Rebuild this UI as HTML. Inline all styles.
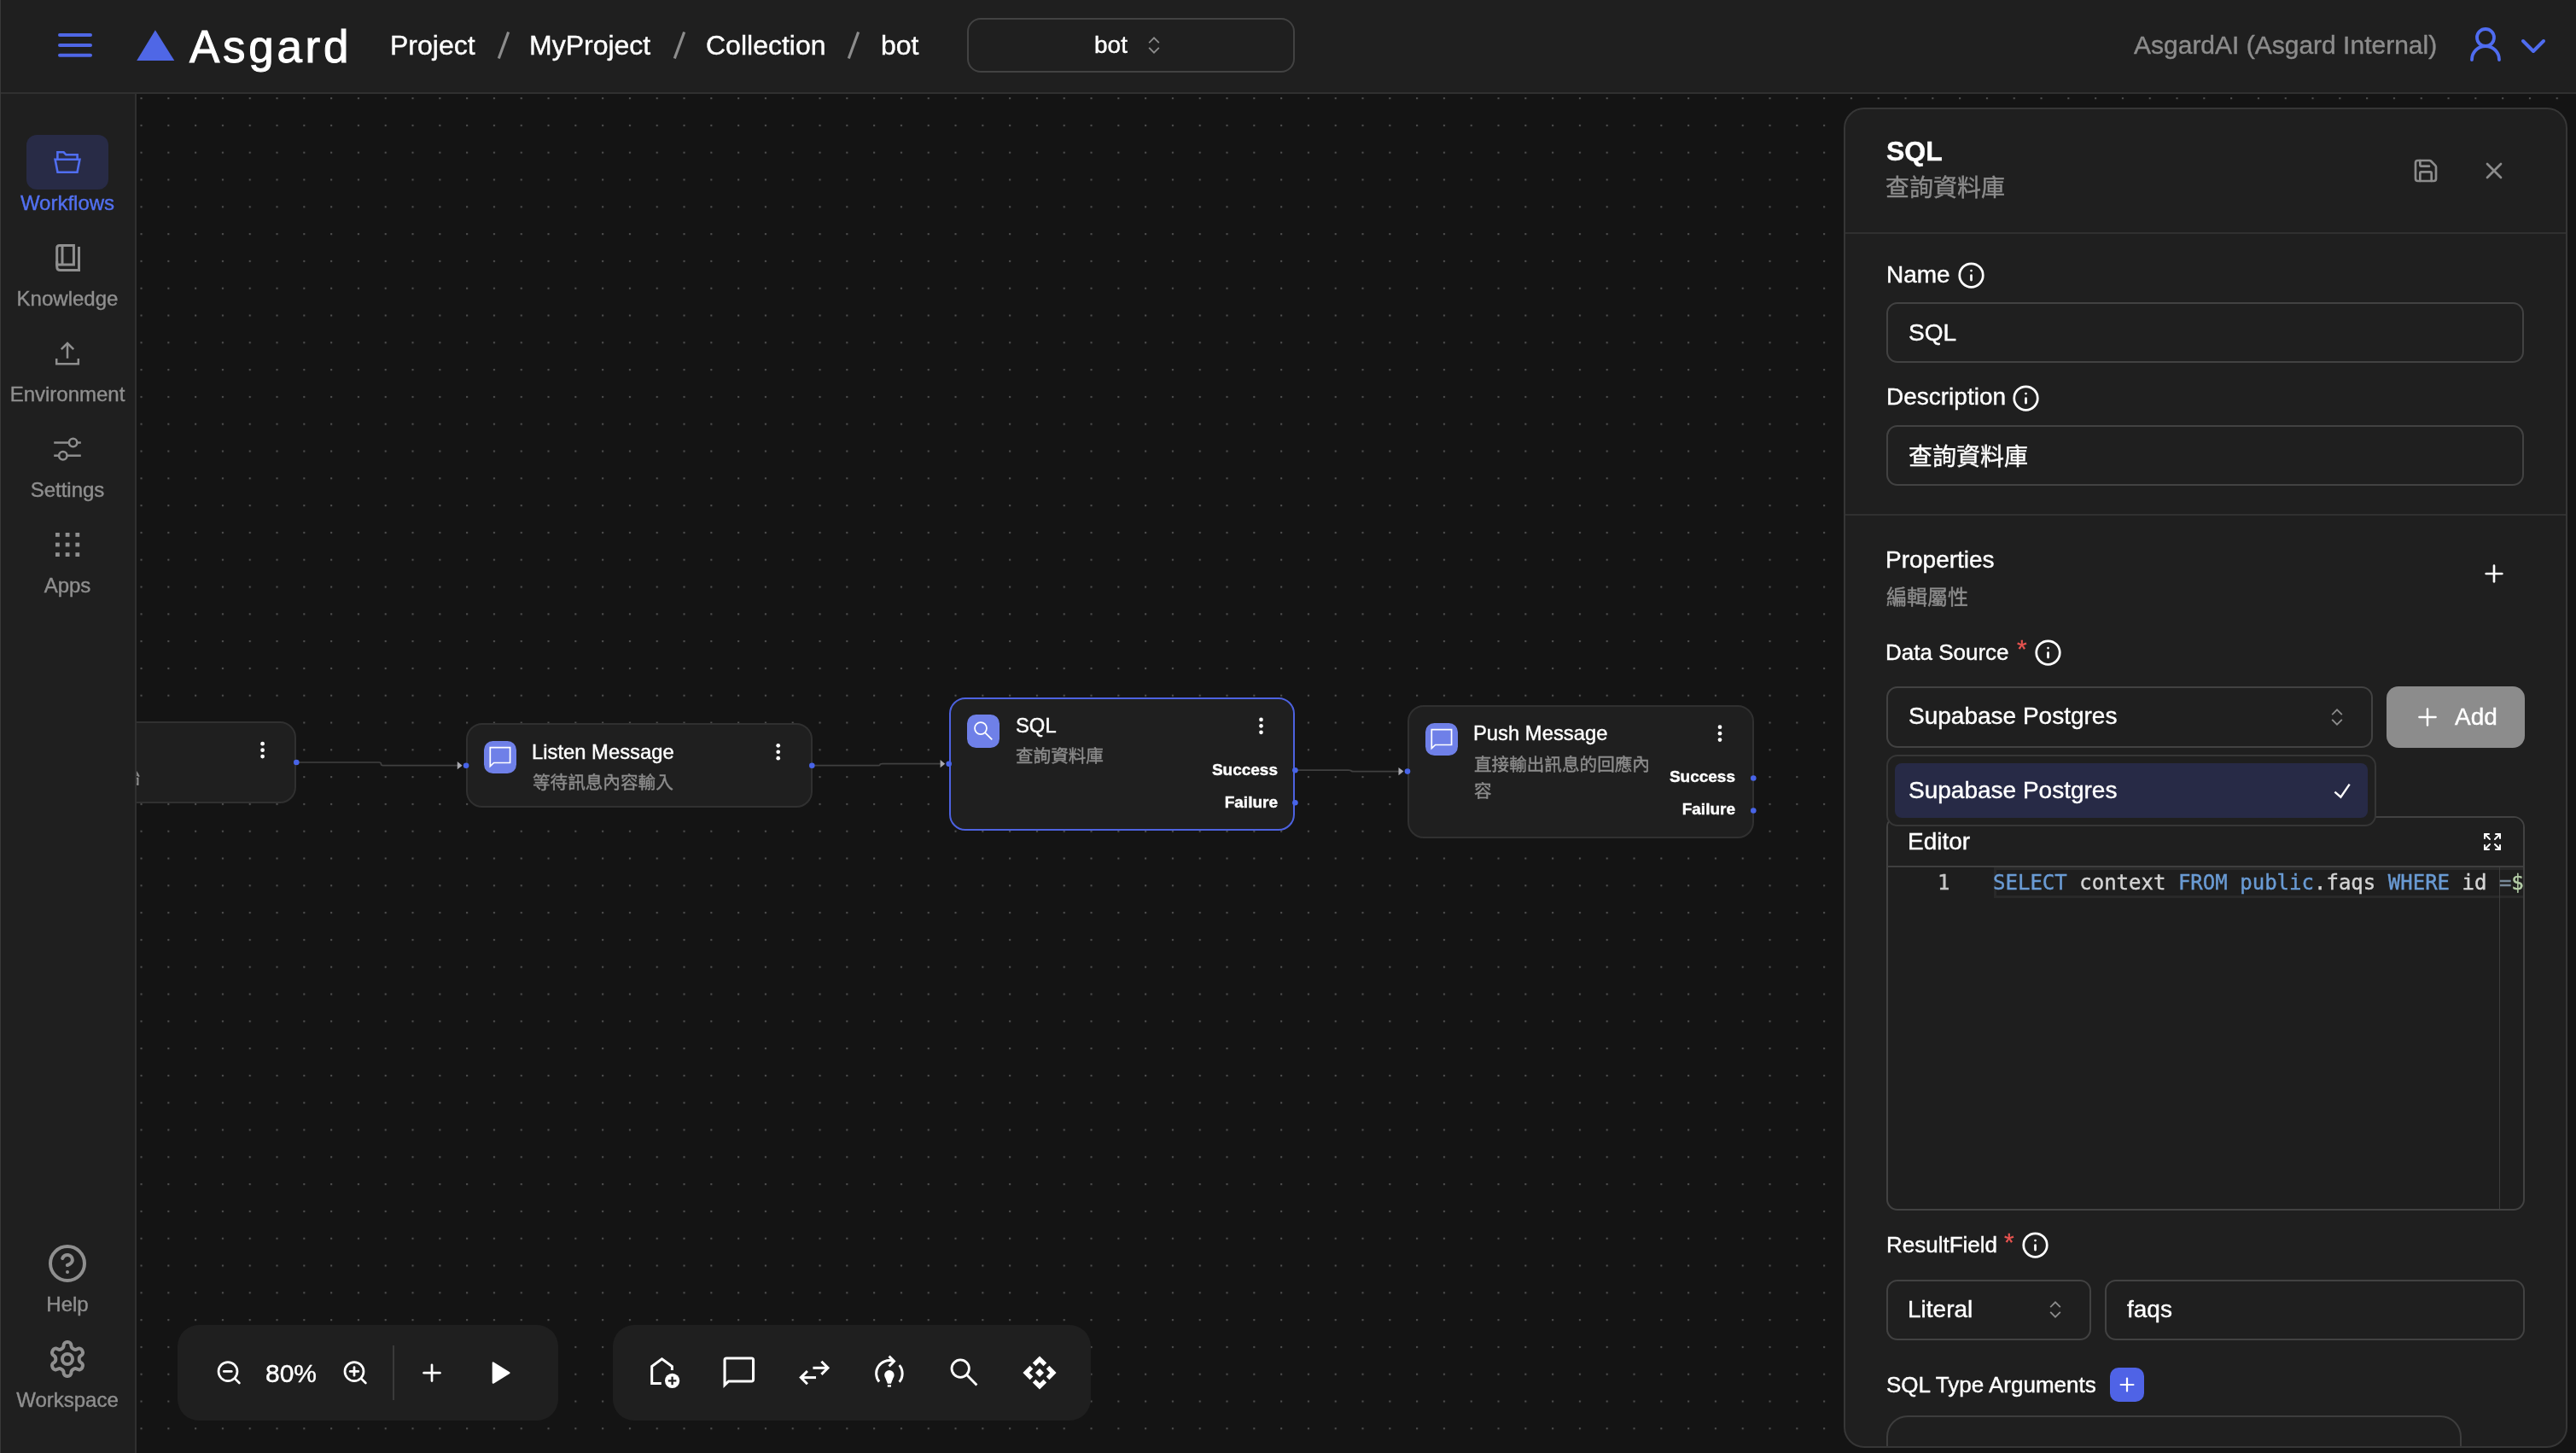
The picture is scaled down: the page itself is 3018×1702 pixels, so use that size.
<!DOCTYPE html>
<html lang="zh-Hant"><head><meta charset="utf-8"><title>Asgard - bot</title>
<style>
html,body{margin:0;padding:0;background:#141414;}
body{width:3018px;height:1702px;overflow:hidden;position:relative;font-family:"Liberation Sans","Noto Sans CJK TC",sans-serif;color:#fff;}
*{box-sizing:border-box;}
.t{position:absolute;white-space:nowrap;line-height:1;-webkit-text-stroke:0.4px;will-change:transform;}
.c{text-align:center;}
.abs{position:absolute;}
svg{position:absolute;overflow:visible;}
.mono{font-family:"DejaVu Sans Mono","Liberation Mono",monospace;}
.box{position:absolute;border:2px solid #424242;border-radius:13px;background:#1f1f1f;}
.node{position:absolute;border:2px solid #323232;border-radius:19px;background:#1f1f1f;}
.ico{position:absolute;width:38.4px;height:38.4px;border-radius:10.5px;background:#6f80e8;}
.h{position:absolute;width:7.4px;height:7.4px;border-radius:50%;background:#4864e8;}
.md{position:absolute;width:4.8px;height:4.8px;border-radius:50%;background:#fff;}
</style></head><body>
<svg width="3018" height="1702" style="left:0;top:0"><defs><pattern id="dp" x="164.5" y="114.1" width="31.8" height="31.8" patternUnits="userSpaceOnUse"><rect x="0" y="0" width="2.1" height="2.1" fill="#4e4e4e"/></pattern></defs><rect x="160" y="110" width="2858" height="1592" fill="url(#dp)"/></svg>
<div class="abs" style="left:0;top:0;width:3018px;height:110px;background:#1f1f1f;border-bottom:2px solid #303030;z-index:5"></div>
<div class="abs" style="left:0;top:0;width:3018px;height:110px;z-index:6">
<svg width="44" height="32" style="left:66px;top:37px" viewBox="66 37 44 32"><g stroke="#4f67e6" stroke-width="4" stroke-linecap="round"><line x1="70" y1="41" x2="106" y2="41"/><line x1="70" y1="52.9" x2="106" y2="52.9"/><line x1="70" y1="64.8" x2="106" y2="64.8"/></g></svg>
<svg width="48" height="40" style="left:158px;top:33px" viewBox="158 33 48 40"><polygon points="181.9,35.2 204.3,71 160.2,71" fill="#4f67e6"/></svg>
<div class="t" style="left:221.80px;top:27.94px;font-size:53px;color:#fff;letter-spacing:3.7px;-webkit-text-stroke:1px #fff;">Asgard</div>
<div class="t" style="left:456.80px;top:36.91px;font-size:32px;color:#fff;">Project</div>
<div class="t" style="left:620.00px;top:36.91px;font-size:32px;color:#fff;">MyProject</div>
<div class="t" style="left:827.20px;top:36.91px;font-size:32px;color:#fff;">Collection</div>
<div class="t" style="left:1031.50px;top:36.91px;font-size:32px;color:#fff;">bot</div>
<svg width="20" height="36" style="left:580.4px;top:35px" viewBox="-10 -18 20 36"><line x1="5.7" y1="-15.5" x2="-5.7" y2="15.5" stroke="#8c8c8c" stroke-width="3.2"/></svg>
<svg width="20" height="36" style="left:786.1px;top:35px" viewBox="-10 -18 20 36"><line x1="5.7" y1="-15.5" x2="-5.7" y2="15.5" stroke="#8c8c8c" stroke-width="3.2"/></svg>
<svg width="20" height="36" style="left:989.7px;top:35px" viewBox="-10 -18 20 36"><line x1="5.7" y1="-15.5" x2="-5.7" y2="15.5" stroke="#8c8c8c" stroke-width="3.2"/></svg>
<div class="abs" style="left:1133px;top:21px;width:384px;height:64px;border:2px solid #424242;border-radius:16px;"></div>
<div class="t" style="left:1281.60px;top:38.90px;font-size:28px;color:#fff;">bot</div>
<svg width="20" height="30" style="left:1342.00px;top:38.20px" viewBox="-10 -15 20 30"><g fill="none" stroke="#8c8c8c" stroke-width="1.8" stroke-linecap="square" stroke-linejoin="miter"><polyline points="-5.2,-3.4 0,-8.7 5.2,-3.4"/><polyline points="-5.2,3.4 0,8.7 5.2,3.4"/></g></svg>
<div class="t" style="left:2500.20px;top:38.11px;font-size:30px;color:#8c8c8c;">AsgardAI (Asgard Internal)</div>
<svg width="48" height="48" style="left:2888.2px;top:28px" viewBox="0 0 24 24" fill="none" stroke="#4f6cf0" stroke-width="1.9" stroke-linecap="round" stroke-linejoin="round"><circle cx="12" cy="8" r="5"/><path d="M20 21a8 8 0 0 0-16 0"/></svg>
<svg width="48" height="48" style="left:2944px;top:29.6px" viewBox="0 0 24 24" fill="none" stroke="#4f6cf0" stroke-width="2" stroke-linecap="round" stroke-linejoin="round"><path d="m6 9 6 6 6-6"/></svg>
</div>
<div class="abs" style="left:0;top:110px;width:160px;height:1592px;background:#1f1f1f;border-right:2px solid #303030;z-index:4"></div>
<div class="abs" style="left:0;top:0;width:1px;height:1702px;background:#383838;z-index:7"></div>
<div class="abs" style="left:0;top:0;width:160px;height:1702px;z-index:6">
<div class="abs" style="left:31px;top:158px;width:96px;height:64px;border-radius:12px;background:#282b46"></div>
<svg width="40" height="34" style="left:59px;top:173px" viewBox="59 173 40 34"><g fill="none" stroke="#506ef0" stroke-width="2.6" stroke-linejoin="miter"><path d="M67.4 186.8 V178.3 H74.6 L77.4 181.3 H90.6 V186.8"/><path d="M64.6 186.8 H93.4 L90.5 201.7 H67.5 Z"/></g></svg>
<div class="t c" style="left:0.00px;width:158px;top:226.08px;font-size:24px;color:#5270f0;">Workflows</div>
<svg width="36" height="40" style="left:61px;top:282px" viewBox="61 282 36 40"><g fill="none" stroke="#8f8f8f" stroke-width="3"><path d="M69.7 287.5 H86.4 V310.1 H66.7 V290.5 Q66.7 287.5 69.7 287.5 Z"/><line x1="73" y1="287.5" x2="73" y2="310.1"/><path d="M66.7 306 V312.5 Q66.7 316.5 70.7 316.5 H92.5 V288.9"/></g></svg>
<div class="t c" style="left:0.00px;width:158px;top:337.68px;font-size:24px;color:#8f8f8f;">Knowledge</div>
<svg width="36" height="36" style="left:61px;top:396px" viewBox="61 396 36 36"><g fill="none" stroke="#8f8f8f" stroke-width="2.5"><path d="M79 419.8 V402"/><path d="M71.8 409.2 L79 402 L86.2 409.2"/><path d="M66.2 420 V426.3 H91.8 V420"/></g></svg>
<div class="t c" style="left:0.00px;width:158px;top:449.68px;font-size:24px;color:#8f8f8f;">Environment</div>
<svg width="40" height="30" style="left:59px;top:510px" viewBox="59 510 40 30"><g fill="none" stroke="#8f8f8f" stroke-width="2.5"><line x1="63.2" y1="518.5" x2="80.6" y2="518.5"/><line x1="90.6" y1="518.5" x2="94.8" y2="518.5"/><circle cx="85.6" cy="518.5" r="4.7"/><line x1="63.2" y1="533.7" x2="68.8" y2="533.7"/><line x1="78.8" y1="533.7" x2="94.8" y2="533.7"/><circle cx="73.8" cy="533.7" r="4.7"/></g></svg>
<div class="t c" style="left:0.00px;width:158px;top:561.98px;font-size:24px;color:#8f8f8f;">Settings</div>
<svg width="36" height="36" style="left:61px;top:620px" viewBox="61 620 36 36"><g fill="#8f8f8f"><rect x="65" y="624" width="4.8" height="4.8"/><rect x="76.7" y="624" width="4.8" height="4.8"/><rect x="88.4" y="624" width="4.8" height="4.8"/><rect x="65" y="635.6" width="4.8" height="4.8"/><rect x="76.7" y="635.6" width="4.8" height="4.8"/><rect x="88.4" y="635.6" width="4.8" height="4.8"/><rect x="65" y="647.2" width="4.8" height="4.8"/><rect x="76.7" y="647.2" width="4.8" height="4.8"/><rect x="88.4" y="647.2" width="4.8" height="4.8"/></g></svg>
<div class="t c" style="left:0.00px;width:158px;top:674.28px;font-size:24px;color:#8f8f8f;">Apps</div>
<svg width="48" height="48" style="left:55px;top:1456px" viewBox="0 0 24 24" fill="none" stroke="#8f8f8f" stroke-width="2" stroke-linecap="round" stroke-linejoin="round"><circle cx="12" cy="12" r="10"/><path d="M9.09 9a3 3 0 0 1 5.83 1c0 2-3 3-3 3"/><path d="M12 17h.01"/></svg>
<div class="t c" style="left:0.00px;width:158px;top:1516.28px;font-size:24px;color:#8f8f8f;">Help</div>
<svg width="48" height="48" style="left:55px;top:1567.8px" viewBox="0 0 24 24" fill="none" stroke="#8f8f8f" stroke-width="2" stroke-linecap="round" stroke-linejoin="round"><path d="M12.22 2h-.44a2 2 0 0 0-2 2v.18a2 2 0 0 1-1 1.73l-.43.25a2 2 0 0 1-2 0l-.15-.08a2 2 0 0 0-2.73.73l-.22.38a2 2 0 0 0 .73 2.73l.15.1a2 2 0 0 1 1 1.72v.51a2 2 0 0 1-1 1.74l-.15.09a2 2 0 0 0-.73 2.73l.22.38a2 2 0 0 0 2.73.73l.15-.08a2 2 0 0 1 2 0l.43.25a2 2 0 0 1 1 1.73V20a2 2 0 0 0 2 2h.44a2 2 0 0 0 2-2v-.18a2 2 0 0 1 1-1.73l.43-.25a2 2 0 0 1 2 0l.15.08a2 2 0 0 0 2.73-.73l.22-.39a2 2 0 0 0-.73-2.73l-.15-.08a2 2 0 0 1-1-1.74v-.5a2 2 0 0 1 1-1.74l.15-.09a2 2 0 0 0 .73-2.73l-.22-.38a2 2 0 0 0-2.73-.73l-.15.08a2 2 0 0 1-2 0l-.43-.25a2 2 0 0 1-1-1.73V4a2 2 0 0 0-2-2z"/><circle cx="12" cy="12" r="3"/></svg>
<div class="t c" style="left:0.00px;width:158px;top:1628.08px;font-size:24px;color:#8f8f8f;">Workspace</div>
</div>
<div class="node" style="left:100px;top:845px;width:247.1px;height:95.8px;border-color:#303030;z-index:2"></div>


<div class="t" style="left:60px;width:104.2px;text-align:right;top:900.86px;font-size:20.6px;color:#8c8c8c;z-index:3">流程開始</div>
<div class="node" style="left:546.0px;top:847.1px;width:405.5px;height:98.8px;border-color:#303030;z-index:2"></div>
<div class="ico" style="left:566.9px;top:868.0px;z-index:3"><svg width="38.4" height="38.4" viewBox="0 0 38.4 38.4" style="left:0;top:0"><path d="M7.3 7.7 H30.6 V25.5 H11.6 L7.3 29.6 Z" fill="none" stroke="#fff" stroke-width="1.7" stroke-linejoin="miter"/></svg></div>
<div class="t" style="left:623.00px;top:868.85px;font-size:23.8px;color:#fff;z-index:3">Listen Message</div>
<div class="t" style="left:624.40px;top:906.56px;font-size:20.6px;color:#8c8c8c;z-index:3">等待訊息內容輸入</div>



<div class="node" style="left:1111.7px;top:816.7px;width:405.7px;height:156.4px;border-color:#4d62e0;z-index:2"></div>
<div class="ico" style="left:1132.7px;top:837.4000000000001px;z-index:3"><svg width="38.4" height="38.4" viewBox="0 0 38.4 38.4" style="left:0;top:0"><g fill="none" stroke="#fff" stroke-width="1.7"><circle cx="16" cy="16.1" r="7"/><line x1="21" y1="21.1" x2="29.3" y2="29.4"/></g></svg></div>
<div class="t" style="left:1189.60px;top:838.15px;font-size:23.8px;color:#fff;z-index:3">SQL</div>
<div class="t" style="left:1190.10px;top:875.86px;font-size:20.6px;color:#8c8c8c;z-index:3">查詢資料庫</div>




<div class="t" style="left:1296.90px;width:200px;text-align:right;top:891.92px;font-size:19px;font-weight:bold;color:#fff;z-index:3">Success</div>
<div class="t" style="left:1296.90px;width:200px;text-align:right;top:929.92px;font-size:19px;font-weight:bold;color:#fff;z-index:3">Failure</div>
<div class="node" style="left:1648.9px;top:825.5px;width:405.8px;height:156.1px;border-color:#303030;z-index:2"></div>
<div class="ico" style="left:1669.8000000000002px;top:846.5px;z-index:3"><svg width="38.4" height="38.4" viewBox="0 0 38.4 38.4" style="left:0;top:0"><path d="M7.3 7.7 H30.6 V25.5 H11.6 L7.3 29.6 Z" fill="none" stroke="#fff" stroke-width="1.7" stroke-linejoin="miter"/></svg></div>
<div class="t" style="left:1725.90px;top:847.35px;font-size:23.8px;color:#fff;z-index:3">Push Message</div>
<div class="t" style="left:1727.30px;top:879.96px;width:206px;white-space:normal;line-height:31px;font-size:20.6px;color:#8c8c8c;z-index:3;word-break:break-all">直接輸出訊息的回應內容</div>




<div class="t" style="left:1833.30px;width:200px;text-align:right;top:900.32px;font-size:19px;font-weight:bold;color:#fff;z-index:3">Success</div>
<div class="t" style="left:1833.30px;width:200px;text-align:right;top:938.32px;font-size:19px;font-weight:bold;color:#fff;z-index:3">Failure</div>
<svg width="3018" height="1702" style="left:0;top:0;z-index:1"><g fill="none" stroke="#404040" stroke-width="1.7"><path d="M350 893 H444.2 Q446.4 893 446.4 894.85 Q446.4 896.7 448.6 896.7 H537"/><path d="M954 896.7 H1028 Q1031 896.7 1031 895.7 Q1031 894.7 1034 894.7 H1103"/><path d="M1520 902.2 H1580 Q1583 902.2 1583 902.9 Q1583 903.6 1586 903.6 H1640"/></g><g fill="#a9a9af"><polygon points="535.8,892.1 535.8,901.3 541.6,896.7"/><polygon points="1101.6,890.1 1101.6,899.3 1107.2,894.7"/><polygon points="1638.5,899 1638.5,908.2 1644.4,903.6"/></g></svg>
<svg width="3018" height="1702" style="left:0;top:0;z-index:3"><circle cx="307.60" cy="871.20" r="2.35" fill="#fff"/><circle cx="307.60" cy="878.65" r="2.35" fill="#fff"/><circle cx="307.60" cy="886.10" r="2.35" fill="#fff"/><circle cx="347.30" cy="893.00" r="3.3" fill="#4864e8"/><circle cx="911.70" cy="873.30" r="2.35" fill="#fff"/><circle cx="911.70" cy="880.75" r="2.35" fill="#fff"/><circle cx="911.70" cy="888.20" r="2.35" fill="#fff"/><circle cx="546.10" cy="896.70" r="3.3" fill="#4864e8"/><circle cx="951.30" cy="896.70" r="3.3" fill="#4864e8"/><circle cx="1477.50" cy="842.90" r="2.35" fill="#fff"/><circle cx="1477.50" cy="850.35" r="2.35" fill="#fff"/><circle cx="1477.50" cy="857.80" r="2.35" fill="#fff"/><circle cx="1111.70" cy="894.70" r="3.3" fill="#4864e8"/><circle cx="1517.40" cy="902.20" r="3.3" fill="#4864e8"/><circle cx="1517.40" cy="940.30" r="3.3" fill="#4864e8"/><circle cx="2015.00" cy="851.70" r="2.35" fill="#fff"/><circle cx="2015.00" cy="859.15" r="2.35" fill="#fff"/><circle cx="2015.00" cy="866.60" r="2.35" fill="#fff"/><circle cx="1649.00" cy="903.60" r="3.3" fill="#4864e8"/><circle cx="2054.30" cy="911.50" r="3.3" fill="#4864e8"/><circle cx="2054.30" cy="949.50" r="3.3" fill="#4864e8"/></svg>
<div class="abs" style="left:208px;top:1552px;width:446px;height:112px;border-radius:25px;background:#1f1f1f;z-index:3"></div>
<div class="abs" style="left:718px;top:1552px;width:560px;height:112px;border-radius:25px;background:#1f1f1f;z-index:3"></div>
<div class="t" style="left:311.40px;top:1593.81px;font-size:30px;color:#fff;z-index:4">80%</div>
<svg width="3018" height="1702" style="left:0;top:0;z-index:4"><g fill="none" stroke="#fff" stroke-width="2.7" stroke-linecap="round"><circle cx="267" cy="1606.6" r="11"/><line x1="275" y1="1614.6" x2="280.4" y2="1620"/><line x1="262.3" y1="1606.4" x2="271.3" y2="1606.4"/><circle cx="415" cy="1606.6" r="11"/><line x1="423" y1="1614.6" x2="428.4" y2="1620"/><line x1="410.2" y1="1606.4" x2="419.8" y2="1606.4"/><line x1="415" y1="1601.6" x2="415" y2="1611.2"/></g><rect x="460" y="1576" width="2" height="64" fill="#3a3a3a"/><g fill="none" stroke="#fff" stroke-width="2.7" stroke-linecap="round"><line x1="496.6" y1="1608.2" x2="515.4" y2="1608.2"/><line x1="506" y1="1598.8" x2="506" y2="1617.6"/></g><polygon points="577.7,1596.4 577.7,1619.8 596.6,1608.1" fill="#fff" stroke="#fff" stroke-width="2" stroke-linejoin="round"/><g fill="none" stroke="#fff" stroke-width="3"><path d="M774.8 1620.5 H763.7 V1600.6 L775.5 1591.9 L787.4 1600.6 V1605"/></g><circle cx="787.6" cy="1617.4" r="8.6" fill="#fff"/><g stroke="#1f1f1f" stroke-width="2.3"><line x1="782.8" y1="1617.4" x2="792.4" y2="1617.4"/><line x1="787.6" y1="1612.6" x2="787.6" y2="1622.2"/></g><path fill="#fff" fill-rule="evenodd" d="M851.2 1589.4 H880.4 a3.7 3.7 0 0 1 3.7 3.7 V1615.8 a3.7 3.7 0 0 1 -3.7 3.7 H854.2 L847.5 1626 V1593.1 a3.7 3.7 0 0 1 3.7 -3.7 Z M850.6 1592.5 H881 V1616.4 H853 L850.6 1618.8 Z"/><g fill="none" stroke="#fff" stroke-width="3"><line x1="952.4" y1="1602.3" x2="970" y2="1602.3"/><polyline points="962.4,1594.7 970,1602.3 962.4,1609.9"/><line x1="938.3" y1="1613.6" x2="956" y2="1613.6"/><polyline points="945.9,1606 938.3,1613.6 945.9,1621.2"/></g><g fill="none" stroke="#fff" stroke-width="2.9"><path d="M1030.01 1618.53 A15.3 15.3 0 0 1 1046.12 1594.19"/><polyline points="1041.6,1588.6 1047.5,1594.5 1041.6,1600.4"/><path d="M1053.62 1599.07 A15.3 15.3 0 0 1 1053.62 1618.73"/></g><g fill="#fff"><circle cx="1041.9" cy="1610.7" r="5.7"/><polygon points="1037.4,1614.2 1046.4,1614.2 1043.9,1620.7 1039.9,1620.7"/><rect x="1039.8" y="1622.3" width="4.2" height="2.3"/></g><g fill="none" stroke="#fff" stroke-width="2.8"><circle cx="1125.2" cy="1603.1" r="10.2"/><line x1="1132.4" y1="1610.3" x2="1144.4" y2="1622.6"/></g><g fill="#fff"><polygon points="1218.0,1588.4 1226.2,1596.6 1222.5,1600.3 1218.0,1595.8 1213.5,1600.3 1209.8,1596.6"/><polygon points="1237.6,1608.0 1229.4,1616.2 1225.7,1612.5 1230.2,1608.0 1225.7,1603.5 1229.4,1599.8"/><polygon points="1218.0,1627.6 1209.8,1619.4 1213.5,1615.7 1218.0,1620.2 1222.5,1615.7 1226.2,1619.4"/><polygon points="1198.4,1608.0 1206.6,1599.8 1210.3,1603.5 1205.8,1608.0 1210.3,1612.5 1206.6,1616.2"/><polygon points="1218,1603 1223,1608 1218,1613 1213,1608"/></g></svg>
<div class="abs" style="left:2160px;top:126px;width:848.2px;height:1570px;border:2px solid #363636;border-radius:24px;background:#1f1f1f;z-index:10;overflow:hidden"><div class="abs" style="left:48.20px;top:1530.00px;width:673.8px;height:120px;border:2px solid #3d3d3d;border-radius:25px;"></div></div>
<div class="abs" style="left:2162px;top:272px;width:844.2px;height:2px;background:#303030;z-index:11"></div>
<div class="abs" style="left:2162px;top:602px;width:844.2px;height:2px;background:#303030;z-index:11"></div>
<div class="t" style="left:2210.30px;top:160.61px;font-size:32px;color:#fff;font-weight:bold;z-index:11">SQL</div>
<div class="t" style="left:2209.40px;top:206.50px;font-size:28px;color:#8c8c8c;z-index:11">查詢資料庫</div>
<svg width="32" height="32" style="left:2826.00px;top:183.80px;z-index:11" viewBox="0 0 24 24" fill="none" stroke="#8c8c8c" stroke-width="2" stroke-linecap="round" stroke-linejoin="round"><path d="M15.2 3a2 2 0 0 1 1.4.6l3.800 3.800a2 2 0 0 1 .6 1.400V19a2 2 0 0 1-2 2H5a2 2 0 0 1-2-2V5a2 2 0 0 1 2-2z"/><path d="M17 21v-7a1 1 0 0 0-1-1H8a1 1 0 0 0-1 1v7"/><path d="M7 3v4a1 1 0 0 0 1 1h7"/></svg>
<svg width="32" height="32" style="left:2906.00px;top:184.00px;z-index:11" viewBox="0 0 24 24" fill="none" stroke="#8c8c8c" stroke-width="2" stroke-linecap="round" stroke-linejoin="round"><path d="M18 6 6 18"/><path d="m6 6 12 12"/></svg>
<div class="t" style="left:2209.50px;top:307.70px;font-size:28px;color:#fff;z-index:11">Name</div>
<svg width="33" height="33" style="left:2292.70px;top:305.50px;z-index:11" viewBox="0 0 24 24" fill="none" stroke="#fff" stroke-width="2" stroke-linecap="round" stroke-linejoin="round"><circle cx="12" cy="12" r="10"/><path d="M12 16v-4"/><path d="M12 8h.01"/></svg>
<div class="box" style="left:2210.2px;top:354.3px;width:747.3px;height:71px;z-index:11"></div>
<div class="t" style="left:2236.10px;top:375.70px;font-size:28px;color:#fff;z-index:11">SQL</div>
<div class="t" style="left:2209.50px;top:451.30px;font-size:28px;color:#fff;z-index:11">Description</div>
<svg width="33" height="33" style="left:2357.40px;top:449.50px;z-index:11" viewBox="0 0 24 24" fill="none" stroke="#fff" stroke-width="2" stroke-linecap="round" stroke-linejoin="round"><circle cx="12" cy="12" r="10"/><path d="M12 16v-4"/><path d="M12 8h.01"/></svg>
<div class="box" style="left:2210.2px;top:498.4px;width:747.3px;height:71px;z-index:11"></div>
<div class="t" style="left:2235.90px;top:522.00px;font-size:28px;color:#fff;z-index:11">查詢資料庫</div>
<div class="t" style="left:2209.40px;top:641.90px;font-size:28px;color:#fff;z-index:11">Properties</div>
<div class="t" style="left:2209.80px;top:688.28px;font-size:24px;color:#8c8c8c;z-index:11">編輯屬性</div>
<svg width="32" height="32" style="left:2906.00px;top:656.00px;z-index:11" viewBox="0 0 24 24" fill="none" stroke="#fff" stroke-width="2" stroke-linecap="round" stroke-linejoin="round"><path d="M5 12h14"/><path d="M12 5v14"/></svg>
<div class="t" style="left:2209.40px;top:751.29px;font-size:26px;color:#fff;z-index:11">Data Source</div>
<div class="t" style="left:2362.60px;top:745.31px;font-size:30px;color:#e85450;z-index:11;-webkit-text-stroke:0.3px">*</div>
<svg width="33" height="33" style="left:2382.50px;top:747.50px;z-index:11" viewBox="0 0 24 24" fill="none" stroke="#fff" stroke-width="2" stroke-linecap="round" stroke-linejoin="round"><circle cx="12" cy="12" r="10"/><path d="M12 16v-4"/><path d="M12 8h.01"/></svg>
<div class="box" style="left:2210.2px;top:804.2px;width:569.6px;height:71.6px;z-index:11"></div>
<div class="t" style="left:2235.90px;top:825.40px;font-size:28px;color:#fff;z-index:11">Supabase Postgres</div>
<svg width="20" height="30" style="z-index:11;left:2728.00px;top:825.00px" viewBox="-10 -15 20 30"><g fill="none" stroke="#8c8c8c" stroke-width="1.8" stroke-linecap="square" stroke-linejoin="miter"><polyline points="-5.2,-3.4 0,-8.7 5.2,-3.4"/><polyline points="-5.2,3.4 0,8.7 5.2,3.4"/></g></svg>
<div class="abs" style="left:2795.8px;top:804px;width:162.4px;height:72px;border-radius:14px;background:#8c8c8c;z-index:11"></div>
<svg width="30" height="30" style="left:2828.9px;top:825.1px;z-index:12" viewBox="-15 -15 30 30"><g stroke="#fff" stroke-width="2.4" stroke-linecap="round"><line x1="-9.6" y1="0" x2="9.6" y2="0"/><line x1="0" y1="-9.6" x2="0" y2="9.6"/></g></svg>
<div class="t" style="left:2875.80px;top:825.60px;font-size:28px;color:#fff;z-index:12">Add</div>
<div class="abs" style="left:2210.2px;top:956.1px;width:747.4px;height:462px;border:2px solid #424242;border-radius:13px;background:#1e1e1e;z-index:11;overflow:hidden"><div class="abs" style="left:0;top:0;width:100%;height:57.9px;background:#1f1f1f;border-bottom:2px solid #3f3f3f"></div><div class="abs" style="left:123.70px;top:58.20px;width:700px;height:35.7px;border:3.9px solid #292929"></div><div class="abs" style="left:715.80px;top:57.9px;width:1px;height:420px;background:#3c3c3c"></div></div>
<div class="t" style="left:2235.20px;top:971.70px;font-size:28px;color:#fff;z-index:12">Editor</div>
<svg width="24" height="24" style="left:2908.00px;top:974.00px;z-index:12" viewBox="0 0 24 24" fill="none" stroke="#fff" stroke-width="2" stroke-linecap="round" stroke-linejoin="round"><path d="m15 15 6 6"/><path d="m15 9 6-6"/><path d="M21 16v5h-5"/><path d="M21 8V3h-5"/><path d="M3 16v5h5"/><path d="m3 21 6-6"/><path d="M3 8V3h5"/><path d="M9 9 3 3"/></svg>
<div class="t mono" style="left:2335.4px;top:1018.96px;font-size:24.03px;line-height:30px;color:#d4d4d4;z-index:12;width:620.5px;overflow:hidden;white-space:pre"><span style="color:#6a9bd4">SELECT</span> context <span style="color:#6a9bd4">FROM</span> <span style="color:#6a9bd4">public</span>.faqs <span style="color:#6a9bd4">WHERE</span> id <span style="color:#778899">=</span><span style="color:#b5cea8">$</span></div>
<div class="t mono" style="left:2269.9px;top:1018.96px;font-size:24px;line-height:30px;color:#c6c6c6;z-index:12">1</div>
<div class="abs" style="left:2210.2px;top:884.3px;width:573.6px;height:83.8px;border:2px solid #363636;border-radius:13px;background:#1f1f1f;z-index:13"></div>
<div class="abs" style="left:2220px;top:894px;width:554px;height:63.8px;border-radius:8px;background:#272a46;z-index:14"></div>
<div class="t" style="left:2235.90px;top:912.20px;font-size:28px;color:#fff;z-index:15">Supabase Postgres</div>
<svg width="30" height="30" style="left:2729px;top:911px;z-index:15" viewBox="2729 911 30 30"><polyline points="2735.4,927.6 2742.4,933.6 2752.7,918.6" fill="none" stroke="#fff" stroke-width="2.4" stroke-linecap="butt" stroke-linejoin="miter"/></svg>
<div class="t" style="left:2209.60px;top:1445.39px;font-size:26px;color:#fff;z-index:11">ResultField</div>
<div class="t" style="left:2348.30px;top:1440.40px;font-size:30px;color:#e85450;z-index:11;-webkit-text-stroke:0.3px">*</div>
<svg width="33" height="33" style="left:2368.30px;top:1441.50px;z-index:11" viewBox="0 0 24 24" fill="none" stroke="#fff" stroke-width="2" stroke-linecap="round" stroke-linejoin="round"><circle cx="12" cy="12" r="10"/><path d="M12 16v-4"/><path d="M12 8h.01"/></svg>
<div class="box" style="left:2210.2px;top:1499px;width:239.5px;height:70.8px;z-index:11"></div>
<div class="t" style="left:2235.10px;top:1520.30px;font-size:28px;color:#fff;z-index:11">Literal</div>
<svg width="20" height="30" style="z-index:11;left:2398.00px;top:1518.60px" viewBox="-10 -15 20 30"><g fill="none" stroke="#8c8c8c" stroke-width="1.8" stroke-linecap="square" stroke-linejoin="miter"><polyline points="-5.2,-3.4 0,-8.7 5.2,-3.4"/><polyline points="-5.2,3.4 0,8.7 5.2,3.4"/></g></svg>
<div class="box" style="left:2465.8px;top:1499px;width:492.4px;height:70.8px;z-index:11"></div>
<div class="t" style="left:2491.50px;top:1520.30px;font-size:28px;color:#fff;z-index:11">faqs</div>
<div class="t" style="left:2209.80px;top:1609.39px;font-size:26px;color:#fff;z-index:11">SQL Type Arguments</div>
<div class="abs" style="left:2472.2px;top:1602.2px;width:40px;height:40px;border-radius:10px;background:#4f63e6;z-index:11"></div>
<svg width="24" height="24" style="left:2480.2px;top:1610.2px;z-index:12" viewBox="-12 -12 24 24"><g stroke="#fff" stroke-width="2.2" stroke-linecap="round"><line x1="-7.4" y1="0" x2="7.4" y2="0"/><line x1="0" y1="-7.4" x2="0" y2="7.4"/></g></svg>
</body></html>
